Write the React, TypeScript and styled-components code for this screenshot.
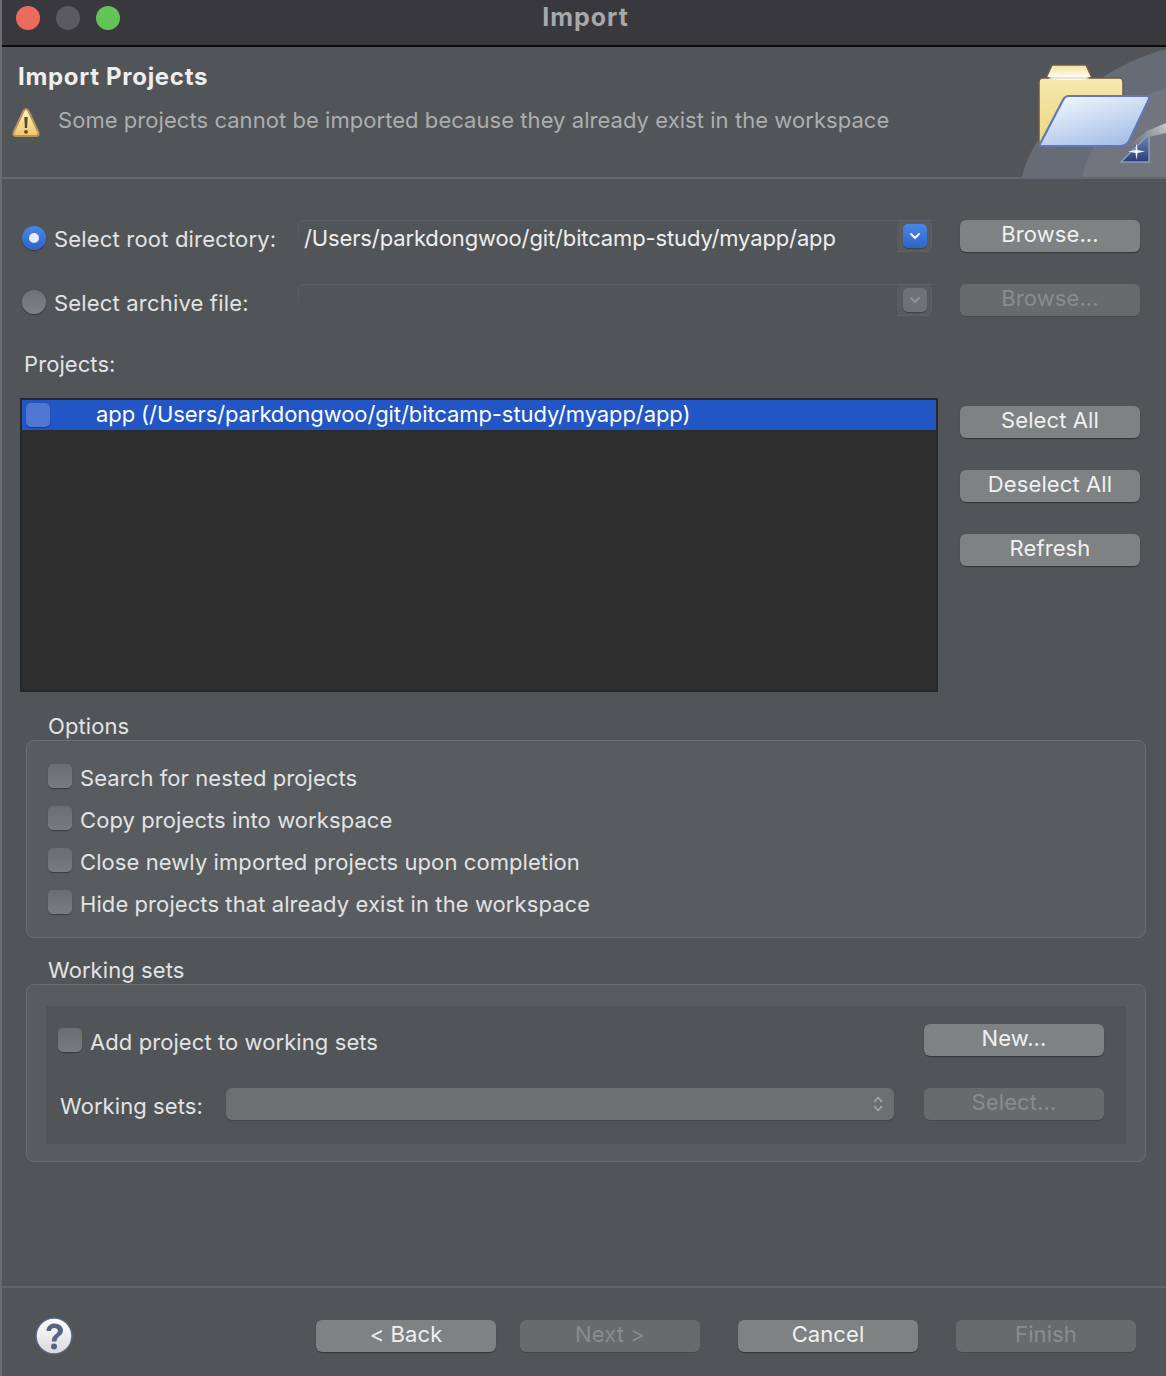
import React from "react";
import styled, { createGlobalStyle } from "styled-components";

const GlobalStyle = createGlobalStyle`
  html, body {
    margin: 0;
    padding: 0;
    background: #515557;
  }
  * {
    box-sizing: border-box;
  }
`;

const FolderBanner = () => (
  <svg width="144" height="130" viewBox="0 0 144 130">
    <defs>
      <linearGradient id="tab" x1="0" y1="0" x2="0" y2="1">
        <stop offset="0" stopColor="#f3e3a0" />
        <stop offset="1" stopColor="#fffdf0" />
      </linearGradient>
      <linearGradient id="back" x1="0" y1="0" x2="0" y2="1">
        <stop offset="0" stopColor="#f6e9ae" />
        <stop offset="1" stopColor="#ecd57c" />
      </linearGradient>
      <linearGradient id="front" x1="0.2" y1="0" x2="0.8" y2="1">
        <stop offset="0" stopColor="#f0f7fe" />
        <stop offset="1" stopColor="#a2bbe6" />
      </linearGradient>
      <linearGradient id="spark" x1="0" y1="0" x2="0" y2="1">
        <stop offset="0" stopColor="#7189b5" />
        <stop offset="1" stopColor="#283f78" />
      </linearGradient>
      <linearGradient id="wedge" x1="0" y1="0.7" x2="1" y2="0.2">
        <stop offset="0" stopColor="#8a8e92" stopOpacity="0" />
        <stop offset="1" stopColor="#bfc2c4" />
      </linearGradient>
    </defs>
    <path d="M0 130 C 8 90 60 25 144 2 L144 130 Z" fill="#666c75" />
    <path d="M60 130 C 66 100 95 55 144 41 L144 130 Z" fill="#70757e" />
    <path d="M100 104 L125 84 L144 76 L144 86 L127 90 Z" fill="url(#wedge)" />
    <path d="M30 18 L64 18 L70 31 L24 31 Z" fill="url(#tab)" stroke="#6f5a4c" strokeWidth="1.5" />
    <rect x="17" y="31" width="84" height="68" rx="4" fill="url(#back)" stroke="#6d5648" strokeWidth="1.5" />
    <ellipse cx="47" cy="31" rx="20" ry="2" fill="#ffffff" opacity="0.8" />
    <path d="M41 53 Q43 49 47 49 L124 49 Q128 49 127 52 L107 94 Q104 99 98 99 L20 99 Q17 99 18 97 Z" fill="url(#front)" stroke="#6076bd" strokeWidth="2.2" />
    <path d="M99 115 L127 87 L127 115 Z" fill="url(#spark)" stroke="#8a9bbd" strokeWidth="1.5" />
    <path d="M114.500 96 L115.500 103 L123 104.500 L115.500 106 L114.500 113 L113.500 106 L106 104.500 L113.500 103 Z" fill="#eef2fa" />
  </svg>
);

const WarningIcon = () => (
  <svg width="30" height="36" viewBox="0 0 30 36">
    <defs>
      <linearGradient id="warn" x1="0" y1="0" x2="0" y2="1">
        <stop offset="0" stopColor="#fdf3c8" />
        <stop offset="1" stopColor="#f0c569" />
      </linearGradient>
    </defs>
    <path d="M14 7 Q15.500 7 16.500 9 L26.300 30 Q27.500 34 24 34 L4 34 Q0.500 34 1.700 30 L11.500 9 Q12.500 7 14 7 Z" fill="url(#warn)" stroke="#b8935a" strokeWidth="2" />
    <path d="M12.300 15 L15.700 15 L15.100 26 L12.900 26 Z" fill="#5d4a28" />
    <circle cx="14" cy="29.800" r="1.900" fill="#5d4a28" />
  </svg>
);

const HelpIcon = () => (
  <svg width="38" height="38" viewBox="0 0 38 38">
    <defs>
      <linearGradient id="help" x1="0" y1="0" x2="0" y2="1">
        <stop offset="0" stopColor="#ffffff" />
        <stop offset="1" stopColor="#d8d9dc" />
      </linearGradient>
    </defs>
    <circle cx="19" cy="19" r="18" fill="url(#help)" stroke="#566583" strokeWidth="1.500" />
    <path d="M11.500 14 C11.500 9 15.500 6.500 19.500 6.500 C24.500 6.500 28 9.500 28 13.500 C28 19 21.500 19 21.500 24.500 L16.800 24.500 C16.800 17.500 22.800 17.500 22.800 13.800 C22.800 12 21.300 11 19.300 11 C17.300 11 16.200 12.300 16 14 Z" fill="#566583" />
    <circle cx="19" cy="29.500" r="3" fill="#566583" />
  </svg>
);

const Chevron = ({ muted }: { muted?: boolean }) => (
  <svg width="12" height="8" viewBox="0 0 12 8">
    <path d="M2 2 L6 6 L10 2" fill="none" stroke={muted ? "#8f9294" : "#f2f5fc"} strokeWidth="2" strokeLinecap="round" strokeLinejoin="round" />
  </svg>
);

const UpDown = () => (
  <svg width="12" height="20" viewBox="0 0 12 20">
    <path d="M2.500 7.500 L6 3.500 L9.500 7.500 M2.500 12.500 L6 16.500 L9.500 12.500" fill="none" stroke="#a3a6a8" strokeWidth="1.600" strokeLinecap="round" strokeLinejoin="round" />
  </svg>
);

export default function App() {
  return (
    <>
      <GlobalStyle />
      <Window>
        <TitleBar>
          <Lights>
            <Light $color="#ec6a5e" />
            <Light $color="#5b5a5f" />
            <Light $color="#61c454" />
          </Lights>
          <WindowTitle>Import</WindowTitle>
        </TitleBar>

        <Header>
          <HeaderText>
            <HeaderTitle>Import Projects</HeaderTitle>
            <HeaderMessage>
              <WarningSlot>
                <WarningIcon />
              </WarningSlot>
              <MessageText>Some projects cannot be imported because they already exist in the workspace</MessageText>
            </HeaderMessage>
          </HeaderText>
          <BannerSlot>
            <FolderBanner />
          </BannerSlot>
        </Header>

        <Body>
          <SourceRow>
            <RadioLabel>
              <Radio $checked />
              <RadioText>Select root directory:</RadioText>
            </RadioLabel>
            <Combo>
              <ComboValue>/Users/parkdongwoo/git/bitcamp-study/myapp/app</ComboValue>
              <ComboCap>
                <ComboArrow $active>
                  <Chevron />
                </ComboArrow>
              </ComboCap>
            </Combo>
            <Button>Browse...</Button>
          </SourceRow>

          <SourceRow $second>
            <RadioLabel>
              <Radio />
              <RadioText>Select archive file:</RadioText>
            </RadioLabel>
            <Combo>
              <ComboValue />
              <ComboCap>
                <ComboArrow>
                  <Chevron muted />
                </ComboArrow>
              </ComboCap>
            </Combo>
            <Button disabled>Browse...</Button>
          </SourceRow>

          <ProjectsLabel>Projects:</ProjectsLabel>

          <ProjectsRow>
            <ProjectList>
              <ProjectItem>
                <ProjectCheck />
                <ProjectName>app (/Users/parkdongwoo/git/bitcamp-study/myapp/app)</ProjectName>
              </ProjectItem>
            </ProjectList>
            <SideButtons>
              <Button>Select All</Button>
              <Button>Deselect All</Button>
              <Button>Refresh</Button>
            </SideButtons>
          </ProjectsRow>

          <Legend>Options</Legend>
          <Group>
            <CheckRow>
              <Checkbox />
              <Label>Search for nested projects</Label>
            </CheckRow>
            <CheckRow>
              <Checkbox />
              <Label>Copy projects into workspace</Label>
            </CheckRow>
            <CheckRow>
              <Checkbox />
              <Label>Close newly imported projects upon completion</Label>
            </CheckRow>
            <CheckRow>
              <Checkbox />
              <Label>Hide projects that already exist in the workspace</Label>
            </CheckRow>
          </Group>

          <WorkingLegend>Working sets</WorkingLegend>
          <WorkingGroup>
            <WorkingInner>
              <WorkingRow>
                <WorkingCheck>
                  <Checkbox />
                  <Label>Add project to working sets</Label>
                </WorkingCheck>
                <Button>New...</Button>
              </WorkingRow>
              <WorkingRow $second>
                <WorkingLabel>Working sets:</WorkingLabel>
                <Dropdown>
                  <UpDown />
                </Dropdown>
                <Button disabled>Select...</Button>
              </WorkingRow>
            </WorkingInner>
          </WorkingGroup>
        </Body>

        <Footer>
          <HelpSlot>
            <HelpIcon />
          </HelpSlot>
          <NavButtons>
            <Button>&lt; Back</Button>
            <Button disabled>Next &gt;</Button>
            <Button>Cancel</Button>
            <Button disabled>Finish</Button>
          </NavButtons>
        </Footer>
      </Window>
    </>
  );
}

const Window = styled.div`
  position: relative;
  display: flex;
  flex-direction: column;
  width: 1166px;
  height: 1376px;
  overflow: hidden;
  background: #515557;
  border-left: 2px solid #696d6f;
  font-family: Inter, "Liberation Sans", sans-serif;
  color: #e6e7e8;
`;

const TitleBar = styled.div`
  position: relative;
  display: flex;
  flex: none;
  align-items: center;
  justify-content: center;
  height: 47px;
  margin-left: -2px;
  padding: 0 0 11px 5px;
  background: #39383c;
  border-bottom: 2px solid #0c0c0d;
`;

const Lights = styled.div`
  position: absolute;
  top: 6px;
  left: 16px;
  display: flex;
  gap: 16px;
`;

const Light = styled.span<{ $color: string }>`
  width: 24px;
  height: 24px;
  border-radius: 50%;
  background: ${(props) => props.$color};
`;

const WindowTitle = styled.div`
  font-size: 25px;
  font-weight: 700;
  letter-spacing: 1px;
  color: #a8a8aa;
`;

const Header = styled.div`
  display: flex;
  flex: none;
  justify-content: space-between;
  height: 132px;
  background: #515557;
  border-bottom: 2px solid #66696b;
`;

const HeaderText = styled.div`
  display: flex;
  flex-direction: column;
  padding: 14px 0 0 16px;
`;

const HeaderTitle = styled.div`
  font-size: 24px;
  font-weight: 700;
  line-height: 32px;
  letter-spacing: 0.7px;
  color: #eeeeee;
`;

const HeaderMessage = styled.div`
  display: flex;
  align-items: center;
  margin-top: 9px;
  margin-left: -6px;
`;

const WarningSlot = styled.div`
  display: flex;
  flex: none;
  width: 46px;
`;

const MessageText = styled.div`
  font-size: 22px;
  letter-spacing: 0.05px;
  color: #acaeaf;
`;

const BannerSlot = styled.div`
  display: flex;
  align-items: flex-end;
`;

const Body = styled.div`
  display: flex;
  flex: 1;
  flex-direction: column;
  padding: 40px 0 0 18px;
`;

const SourceRow = styled.div<{ $second?: boolean }>`
  display: flex;
  align-items: center;
  height: 34px;
  margin-top: ${(props) => (props.$second ? "30px" : "0")};
`;

const RadioLabel = styled.div`
  display: flex;
  flex: none;
  align-items: center;
  gap: 8px;
  width: 278px;
  padding-left: 2px;
`;

const Radio = styled.span<{ $checked?: boolean }>`
  position: relative;
  flex: none;
  width: 24px;
  height: 24px;
  margin-top: 4px;
  border-radius: 50%;
  background: ${(props) =>
    props.$checked
      ? "linear-gradient(#4a86e6, #2e64c8)"
      : "linear-gradient(#6f7274, #7f8284)"};
  box-shadow: 0 1px 1px rgba(0, 0, 0, 0.35);

  &::after {
    content: "";
    display: ${(props) => (props.$checked ? "block" : "none")};
    position: absolute;
    top: 7px;
    left: 7px;
    width: 10px;
    height: 10px;
    border-radius: 50%;
    background: #e6eefc;
  }
`;

const Label = styled.span`
  margin-top: 4px;
  font-size: 22px;
  line-height: 28px;
  letter-spacing: 0.08px;
  white-space: nowrap;
  color: #e2e3e4;
`;

const RadioText = styled(Label)`
  margin-top: 6px;
  letter-spacing: 0.18px;
`;

const Combo = styled.div`
  display: flex;
  flex: none;
  align-items: stretch;
  width: 634px;
  height: 32px;
  border-top: 1px solid #5f6365;
  border-top-left-radius: 6px;
  background: linear-gradient(#5f6365, #515557) left top / 1px 24px no-repeat;
`;

const ComboValue = styled.span`
  flex: 1;
  margin-top: 3px;
  padding-left: 6px;
  font-size: 22px;
  line-height: 28px;
  letter-spacing: -0.13px;
  white-space: nowrap;
  color: #eeeeee;
`;

const ComboCap = styled.span`
  display: flex;
  flex: none;
  align-items: center;
  justify-content: center;
  width: 35px;
  padding-left: 2px;
  background: #585c5e;
  border-right: 1px solid #5f6365;
  border-bottom: 1px solid #5f6365;
  border-bottom-right-radius: 6px;
  border-top-right-radius: 6px;
`;

const ComboArrow = styled.span<{ $active?: boolean }>`
  display: flex;
  align-items: center;
  justify-content: center;
  width: 24px;
  height: 24px;
  border-radius: 5px;
  background: ${(props) =>
    props.$active ? "linear-gradient(#4a86e6, #2e64c8)" : "#6f7274"};
  box-shadow: 0 1px 1px rgba(0, 0, 0, 0.3);
`;

const Button = styled.button`
  flex: none;
  width: 180px;
  height: 32px;
  margin-left: 28px;
  padding: 0 0 4px;
  border: 0;
  border-radius: 6px;
  font-family: inherit;
  font-size: 22px;
  letter-spacing: 0.1px;
  color: #f0f0f1;
  background: #7f8283;
  box-shadow: 0 1px 1px rgba(0, 0, 0, 0.4);

  &:disabled {
    color: #898c8e;
    background: #686b6c;
    box-shadow: 0 1px 1px rgba(0, 0, 0, 0.15);
  }
`;

const ProjectsLabel = styled.div`
  margin-top: 33px;
  padding-left: 4px;
  font-size: 22px;
  line-height: 28px;
  letter-spacing: 0.08px;
  color: #e2e3e4;
`;

const ProjectsRow = styled.div`
  display: flex;
  margin-top: 20px;
`;

const ProjectList = styled.div`
  flex: none;
  width: 918px;
  height: 294px;
  background: #2d2d2d;
  border: 2px solid #27282a;
`;

const ProjectItem = styled.div`
  display: flex;
  align-items: center;
  gap: 46px;
  height: 30px;
  padding-left: 4px;
  background: #2256c4;
`;

const ProjectName = styled.span`
  margin-bottom: 2px;
  font-size: 22px;
  letter-spacing: -0.09px;
  white-space: nowrap;
  color: #ffffff;
`;

const ProjectCheck = styled.span`
  flex: none;
  width: 24px;
  height: 24px;
  border-radius: 5px;
  background: #5078d2;
  box-shadow: 0 1px 1px rgba(0, 0, 0, 0.3);
`;

const SideButtons = styled.div`
  display: flex;
  flex-direction: column;
  gap: 32px;
  margin-left: -6px;
  padding-top: 8px;
`;

const Legend = styled.div`
  margin-top: 20px;
  padding-left: 28px;
  font-size: 22px;
  line-height: 28px;
  letter-spacing: 0.08px;
  color: #e2e3e4;
`;

const WorkingLegend = styled(Legend)`
  margin-top: 18px;
`;

const Group = styled.div`
  display: flex;
  flex-direction: column;
  gap: 18px;
  width: 1120px;
  height: 198px;
  margin-left: 6px;
  padding: 23px 0 0 21px;
  border: 1px solid #6a6e70;
  border-radius: 8px;
  background: #585c5e;
`;

const CheckRow = styled.div`
  display: flex;
  align-items: center;
  gap: 8px;
  height: 24px;
`;

const Checkbox = styled.span`
  flex: none;
  width: 24px;
  height: 24px;
  border-radius: 5px;
  background: linear-gradient(#6b6e70, #797c7e);
  box-shadow: 0 1px 1px rgba(0, 0, 0, 0.35);
`;

const WorkingGroup = styled.div`
  width: 1120px;
  height: 178px;
  margin-left: 6px;
  padding: 21px 19px 0;
  border: 1px solid #6a6e70;
  border-radius: 8px;
  background: #585c5e;
`;

const WorkingInner = styled.div`
  display: flex;
  flex-direction: column;
  height: 138px;
  padding: 18px 22px 0 12px;
  background: #515557;
`;

const WorkingRow = styled.div<{ $second?: boolean }>`
  display: flex;
  align-items: center;
  height: 32px;
  margin-top: ${(props) => (props.$second ? "32px" : "0")};
  padding-left: ${(props) => (props.$second ? "2px" : "0")};
`;

const WorkingCheck = styled.div`
  display: flex;
  flex: 1;
  align-items: center;
  gap: 8px;
`;

const WorkingLabel = styled(Label)`
  flex: none;
  width: 166px;
`;

const Dropdown = styled.div`
  display: flex;
  flex: none;
  align-items: center;
  justify-content: flex-end;
  width: 668px;
  height: 32px;
  margin-right: 2px;
  padding-right: 10px;
  border-radius: 6px;
  background: #6c6f70;
  box-shadow: 0 1px 1px rgba(0, 0, 0, 0.15);
`;

const Footer = styled.div`
  display: flex;
  flex: none;
  align-items: center;
  height: 90px;
  padding: 8px 30px 0 33px;
  border-top: 2px solid #62666a;
`;

const HelpSlot = styled.div`
  display: flex;
  flex: none;
`;

const NavButtons = styled.div`
  display: flex;
  gap: 24px;
  margin-left: auto;

  & > button {
    margin-left: 0;
  }
  & > button:nth-child(3),
  & > button:nth-child(4) {
    margin-left: 14px;
  }
`;
